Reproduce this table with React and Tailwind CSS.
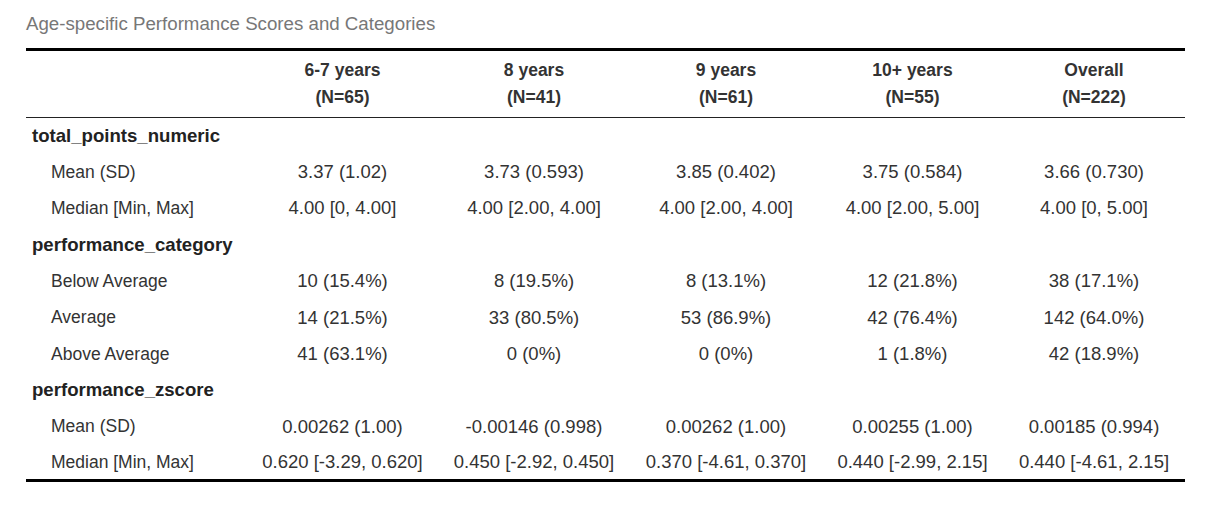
const columns = [
  { label: '6-7 years', n: 'N=65', w: 'w-[191px]' },
  { label: '8 years', n: 'N=41', w: 'w-[192px]' },
  { label: '9 years', n: 'N=61', w: 'w-[192px]' },
  { label: '10+ years', n: 'N=55', w: 'w-[181px]' },
  { label: 'Overall', n: 'N=222', w: 'w-[182px]' },
];

const sections = [
  {
    name: 'total_points_numeric',
    rows: [
      ['Mean (SD)', '3.37 (1.02)', '3.73 (0.593)', '3.85 (0.402)', '3.75 (0.584)', '3.66 (0.730)'],
      ['Median [Min, Max]', '4.00 [0, 4.00]', '4.00 [2.00, 4.00]', '4.00 [2.00, 4.00]', '4.00 [2.00, 5.00]', '4.00 [0, 5.00]'],
    ],
  },
  {
    name: 'performance_category',
    rows: [
      ['Below Average', '10 (15.4%)', '8 (19.5%)', '8 (13.1%)', '12 (21.8%)', '38 (17.1%)'],
      ['Average', '14 (21.5%)', '33 (80.5%)', '53 (86.9%)', '42 (76.4%)', '142 (64.0%)'],
      ['Above Average', '41 (63.1%)', '0 (0%)', '0 (0%)', '1 (1.8%)', '42 (18.9%)'],
    ],
  },
  {
    name: 'performance_zscore',
    rows: [
      ['Mean (SD)', '0.00262 (1.00)', '-0.00146 (0.998)', '0.00262 (1.00)', '0.00255 (1.00)', '0.00185 (0.994)'],
      ['Median [Min, Max]', '0.620 [-3.29, 0.620]', '0.450 [-2.92, 0.450]', '0.370 [-4.61, 0.370]', '0.440 [-2.99, 2.15]', '0.440 [-4.61, 2.15]'],
    ],
  },
];

export default function App() {
  return (
    <div className="w-[1226px] h-[522px] bg-white font-['Liberation_Sans',Arial,sans-serif] text-[#333]">
      {/* caption */}
      <div className="pl-[26px] pt-[12px] h-[48px] text-[18.7px] leading-[24px] text-[#777]">
        Age-specific Performance Scores and Categories
      </div>

      <table className="ml-[26px] w-[1159px] table-fixed border-collapse border-t-[3px] border-b-[3px] border-black">
        <colgroup>
          <col className="w-[221px]" />
          {columns.map((c) => (
            <col key={c.label} className={c.w} />
          ))}
        </colgroup>
        <thead>
          <tr className="border-b-[1.5px] border-[#222]">
            <th className="h-[66px]"></th>
            {columns.map((c) => (
              <th key={c.label} className="pt-[6px] pb-[6px] text-center text-[17.5px] leading-[27px] font-bold text-[#333]">
                <div>{c.label}</div>
                <div>({c.n})</div>
              </th>
            ))}
          </tr>
        </thead>
        <tbody>
          {sections.map((s) => (
            <Section key={s.name} section={s} />
          ))}
        </tbody>
      </table>
    </div>
  );
}

function Section({ section }) {
  return (
    <>
      <tr className="h-[36.35px]">
        <td className="pl-[6px] text-left text-[18.6px] font-bold text-[#222] whitespace-nowrap">{section.name}</td>
        <td colSpan={5}></td>
      </tr>
      {section.rows.map((r, i) => (
        <tr key={i} className="h-[36.35px]">
          <td className="pl-[25px] text-left text-[17.5px] whitespace-nowrap">{r[0]}</td>
          {r.slice(1).map((v, j) => (
            <td key={j} className="text-center text-[18.5px] whitespace-nowrap">
              {v}
            </td>
          ))}
        </tr>
      ))}
    </>
  );
}
